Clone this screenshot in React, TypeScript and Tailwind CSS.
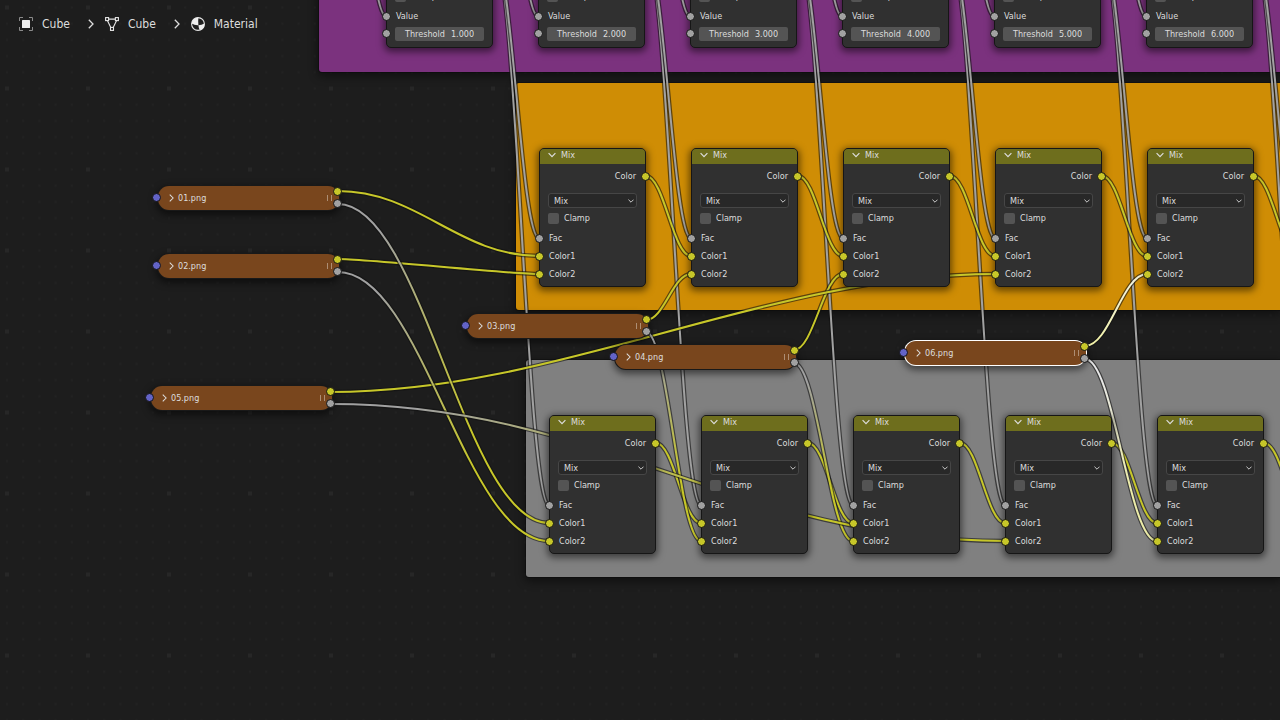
type SocketKind = "color" | "value" | "vector";
type Point = [number, number];

interface Link {
    from: Point;
    to: Point;
    start: string;
    end: string;
}

const YELLOW = "#c7c729";
const GRAY = "#a1a1a1";

// distance between two neighbouring nodes of a row
const PITCH = 152;

const mixRows = [
    { row: "top", x: [539, 691, 843, 995, 1147], y: 148 },
    { row: "bottom", x: [549, 701, 853, 1005, 1157], y: 415 },
];

const mathNodes = [
    { x: 386, threshold: "1.000" },
    { x: 538, threshold: "2.000" },
    { x: 690, threshold: "3.000" },
    { x: 842, threshold: "4.000" },
    { x: 994, threshold: "5.000" },
    { x: 1146, threshold: "6.000" },
];

const imageNodes = [
    { name: "01.png", x: 158, y: 186, selected: false },
    { name: "02.png", x: 158, y: 254, selected: false },
    { name: "03.png", x: 467, y: 314, selected: false },
    { name: "04.png", x: 615, y: 345, selected: false },
    { name: "05.png", x: 151, y: 386, selected: false },
    { name: "06.png", x: 905, y: 341, selected: true },
];

const links: Link[] = [
    // threshold results into the Fac inputs of both rows
    ...[0, 1, 2, 3, 4, 5].flatMap((i) => [
        { from: [494 + i * PITCH, -46] as Point, to: [549 + i * PITCH, 505] as Point, start: GRAY, end: GRAY },
        { from: [494 + i * PITCH, -46] as Point, to: [539 + i * PITCH, 238] as Point, start: GRAY, end: GRAY },
        { from: [341 + i * PITCH, -250] as Point, to: [386 + i * PITCH, 16] as Point, start: GRAY, end: GRAY },
    ]),
    // mix chains
    ...[0, 1, 2, 3, 4].flatMap((i) => [
        { from: [646 + i * PITCH, 176] as Point, to: [691 + i * PITCH, 256] as Point, start: YELLOW, end: YELLOW },
        { from: [656 + i * PITCH, 443] as Point, to: [701 + i * PITCH, 523] as Point, start: YELLOW, end: YELLOW },
    ]),
    // image colors
    { from: [338, 191], to: [539, 256], start: YELLOW, end: YELLOW },
    { from: [338, 259], to: [539, 274], start: YELLOW, end: YELLOW },
    { from: [646, 320], to: [691, 274], start: YELLOW, end: YELLOW },
    { from: [794, 350], to: [843, 274], start: YELLOW, end: YELLOW },
    { from: [331, 392], to: [995, 274], start: YELLOW, end: YELLOW },
    // image alphas
    { from: [338, 204], to: [549, 523], start: GRAY, end: YELLOW },
    { from: [338, 272], to: [549, 541], start: GRAY, end: YELLOW },
    { from: [646, 332], to: [701, 541], start: GRAY, end: YELLOW },
    { from: [794, 363], to: [853, 541], start: GRAY, end: YELLOW },
    { from: [331, 404], to: [1005, 541], start: GRAY, end: YELLOW },
    // links of the selected node
    { from: [1085, 346], to: [1147, 274], start: "#f0f0a8", end: "#f3f3d8" },
    { from: [1085, 359], to: [1157, 541], start: "#e8e8e8", end: "#ececa8" },
];

function linkPath({ from, to }: Link) {
    const [x1, y1] = from;
    const [x2, y2] = to;
    const dx = x2 - x1;
    const slope = Math.abs((y2 - y1) / dx);
    const handle = 0.4 * dx * Math.min(1, slope * 4.9);
    return `M${x1} ${y1} C${x1 + handle} ${y1} ${x2 - handle} ${y2} ${x2} ${y2}`;
}

function Grid() {
    const steps = [0, 1, 2, 3, 4];
    return (
        <svg className="absolute inset-0 w-full h-full" aria-hidden="true">
            <defs>
                <pattern id="dots" x="-1" y="-0.5" width="81" height="81" patternUnits="userSpaceOnUse">
                    {steps.flatMap((r) =>
                        steps.map((c) => (
                            <rect key={`${r}-${c}`} x={7 + c * 16.2} y={7 + r * 16.2} width="2" height="2" fill="#222222" />
                        ))
                    )}
                    <rect x="6" y="6" width="4" height="4" fill="#272727" />
                </pattern>
            </defs>
            <rect width="100%" height="100%" fill="url(#dots)" />
        </svg>
    );
}

function Links() {
    return (
        <svg className="absolute inset-0 w-full h-full" fill="none" aria-hidden="true">
            <defs>
                {links.map((link, i) => (
                    <linearGradient
                        key={i}
                        id={`link-${i}`}
                        gradientUnits="userSpaceOnUse"
                        x1={link.from[0]}
                        y1={link.from[1]}
                        x2={link.to[0]}
                        y2={link.to[1]}
                    >
                        <stop offset="0.12" stopColor={link.start} />
                        <stop offset="0.7" stopColor={link.end} />
                    </linearGradient>
                ))}
            </defs>
            {links.map((link, i) => (
                <g key={i}>
                    <path d={linkPath(link)} stroke="#111111" strokeOpacity="0.6" strokeWidth="4.4" />
                    <path d={linkPath(link)} stroke={`url(#link-${i})`} strokeWidth="2" />
                </g>
            ))}
        </svg>
    );
}

const socketColors: Record<SocketKind, string> = {
    color: "bg-[#c7c729]",
    value: "bg-[#a1a1a1]",
    vector: "bg-[#6363c7]",
};

function Socket({ kind, className }: { kind: SocketKind; className: string }) {
    return <span className={`absolute size-[9px] rounded-full border border-[#141414] ${socketColors[kind]} ${className}`} />;
}

function Chevron({ className }: { className: string }) {
    return (
        <svg viewBox="0 0 8 8" className={className} fill="none" stroke="currentColor" strokeWidth="1.2" aria-hidden="true">
            <path d="M0.6 2.2 L4 5.6 L7.4 2.2" />
        </svg>
    );
}

function ChevronRight({ className }: { className: string }) {
    return (
        <svg viewBox="0 0 6 10" className={className} fill="none" stroke="currentColor" strokeWidth="1.3" aria-hidden="true">
            <path d="M0.8 0.8 L5 5 L0.8 9.2" />
        </svg>
    );
}

function InputRow({ label, kind }: { label: string; kind: SocketKind }) {
    return (
        <div className="relative flex items-center h-[18px] px-[9px]">
            <Socket kind={kind} className="-left-[5px] top-[5px]" />
            {label}
        </div>
    );
}

function Clamp() {
    return (
        <label className="flex items-center h-3 px-2 gap-[5px]">
            <input type="checkbox" className="appearance-none size-[11px] rounded-[2px] bg-[#545454]" />
            Clamp
        </label>
    );
}

const nodeBox =
    "absolute w-[107px] rounded-[5px] border border-[#161616] bg-[#303030] shadow-[0_2px_7px_2px_rgba(0,0,0,0.5)]";

function MixNode({ x, y }: { x: number; y: number }) {
    return (
        <section className={`${nodeBox} pb-[3px]`} style={{ left: x, top: y }}>
            <header className="flex items-start h-[15px] px-2 rounded-t bg-[#6e6e1d]">
                <button type="button" className="flex items-center gap-[5px]">
                    <Chevron className="size-2" />
                    Mix
                </button>
            </header>
            <div className="relative flex items-center justify-end h-[18px] mt-[3px] px-[9px]">
                Color
                <Socket kind="color" className="-right-[5px] top-[5px]" />
            </div>
            <div className="relative mx-2 mt-2">
                <select
                    aria-label="Blend mode"
                    className="block appearance-none w-full h-[15px] pl-[5px] rounded-[3px] border border-[#464646] bg-[#282828] leading-3"
                >
                    <option>Mix</option>
                </select>
                <Chevron className="absolute right-[3px] top-[5px] size-[6px] pointer-events-none" />
            </div>
            <div className="mt-1 mb-[5px]">
                <Clamp />
            </div>
            <InputRow label="Fac" kind="value" />
            <InputRow label="Color1" kind="color" />
            <InputRow label="Color2" kind="color" />
        </section>
    );
}

function MathNode({ x, threshold }: { x: number; threshold: string }) {
    return (
        <section className={`${nodeBox} -top-[11px] pb-1`} style={{ left: x }}>
            <div className="mb-[5px]">
                <Clamp />
            </div>
            <InputRow label="Value" kind="value" />
            <div className="relative flex items-center h-[18px] px-2">
                <Socket kind="value" className="-left-[5px] top-1" />
                <label className="flex items-center justify-center gap-[6px] w-full h-[14px] rounded-[2px] bg-[#545454]">
                    Threshold
                    <input type="text" defaultValue={threshold} className="w-[23px] bg-transparent" />
                </label>
            </div>
        </section>
    );
}

function ImageNode({ name, x, y, selected }: { name: string; x: number; y: number; selected: boolean }) {
    const ring = selected
        ? "shadow-[0_0_0_1px_#ffffff,0_3px_7px_2px_rgba(0,0,0,0.5)]"
        : "shadow-[0_0_0_1px_#191919,0_3px_7px_2px_rgba(0,0,0,0.5)]";
    return (
        <section
            className={`absolute flex items-center w-[181px] h-6 pl-[11px] pr-[7px] rounded-[11px] bg-[#79461d] ${ring}`}
            style={{ left: x, top: y }}
        >
            <Socket kind="vector" className="-left-[6px] top-[7px]" />
            <button type="button" className="flex items-center gap-1">
                <ChevronRight className="w-[5px] h-2" />
                {name}
            </button>
            <span className="flex h-[6px] w-[5px] ml-auto border-x border-[#ad8e74]" />
            <Socket kind="color" className="-right-[3px] top-px" />
            <Socket kind="value" className="-right-[3px] top-[13px]" />
        </section>
    );
}

function ObjectIcon() {
    return (
        <svg viewBox="0 0 14 14" className="size-[14px]" fill="none" aria-hidden="true">
            <path d="M0.5 4V0.5H4 M10 0.5H13.5V4 M13.5 10V13.5H10 M4 13.5H0.5V10" stroke="#8a8a8a" />
            <rect x="3" y="3" width="8" height="8" rx="0.5" fill="#eeeeee" />
        </svg>
    );
}

function MeshIcon() {
    return (
        <svg viewBox="0 0 14 14" className="size-[14px]" fill="none" stroke="#e6e6e6" strokeWidth="1.1" aria-hidden="true">
            <rect x="0.6" y="0.6" width="3" height="3" />
            <rect x="10.4" y="0.6" width="3" height="3" />
            <rect x="5.5" y="10.4" width="3" height="3" />
            <path d="M3.6 2.1H10.4 M2.4 3.6L5.8 10.4 M11.6 3.6L8.2 10.4" />
        </svg>
    );
}

function MaterialIcon() {
    return (
        <svg viewBox="0 0 14 14" className="size-[14px]" fill="none" aria-hidden="true">
            <circle cx="7" cy="7" r="6.4" stroke="#e6e6e6" strokeWidth="1.1" />
            <path d="M7.4 0.6 Q7 4 7.4 8.2 Q3.6 8.4 0.6 6.6 A6.4 6.4 0 0 1 7.4 0.6Z" fill="#eeeeee" />
            <path d="M7.4 8.2 Q10.6 8.2 13.4 6.4 A6.4 6.4 0 0 1 8.8 13.2 Q7.6 11 7.4 8.2Z" fill="#eeeeee" />
        </svg>
    );
}

function Breadcrumb() {
    const crumbs = [
        { label: "Cube", icon: ObjectIcon },
        { label: "Cube", icon: MeshIcon },
        { label: "Material", icon: MaterialIcon },
    ];

    return (
        <nav className="relative pt-4 pl-[19px] text-xs leading-4">
            <ol className="flex items-center">
                {crumbs.map((crumb, i) => {
                    const Icon = crumb.icon;
                    return (
                        <li key={i} className="flex items-center">
                            {i > 0 && <ChevronRight className="w-[6px] h-[10px] ml-[18px] mr-[11px]" />}
                            <a href="#" className="flex items-center gap-[9px]">
                                <Icon />
                                {crumb.label}
                            </a>
                        </li>
                    );
                })}
            </ol>
        </nav>
    );
}

const frame = "absolute right-0 rounded-l-[3px] shadow-[0_0_0_1px_rgba(0,0,0,0.25),0_3px_8px_2px_rgba(0,0,0,0.4)]";

export default function App() {
    return (
        <main className="relative h-screen overflow-hidden bg-[#1d1d1d] text-[#dddddd] text-[9px] leading-3 font-['DejaVu_Sans_Condensed','DejaVu_Sans',sans-serif]">
            <Grid />
            <div className={`${frame} left-[319px] -top-4 h-[88px] bg-[#7b327e]`} />
            <div className={`${frame} left-[516px] top-[83px] h-[227px] bg-[#cf8d05]`} />
            <div className={`${frame} left-[526px] top-[360px] h-[217px] bg-[#808080]`} />
            <Links />
            {mathNodes.map((node) => (
                <MathNode key={node.x} {...node} />
            ))}
            {mixRows.map(({ row, x, y }) => x.map((left) => <MixNode key={`${row}-${left}`} x={left} y={y} />))}
            {imageNodes.map((node) => (
                <ImageNode key={node.name} {...node} />
            ))}
            <Breadcrumb />
        </main>
    );
}
